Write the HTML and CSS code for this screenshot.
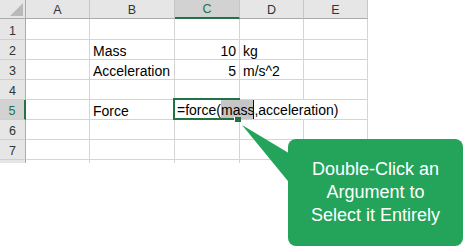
FILE: index.html
```html
<!DOCTYPE html>
<html lang="en">
<head>
    <meta charset="UTF-8">
    <meta name="viewport" content="width=device-width, initial-scale=1.0">
    <title>Force formula</title>
    <link rel="stylesheet" href="styles.css">
</head>
<body>
    <div class="sheet">
        <div class="grid">
            <div class="hd corner">
                <svg class="tri" width="14" height="14" viewBox="0 0 14 14"><polygon points="0,13 13,13 13,0" fill="#b9b9b9"/></svg>
            </div>
            <div class="hd col">A</div>
            <div class="hd col">B</div>
            <div class="hd col sel">C</div>
            <div class="hd col">D</div>
            <div class="hd col">E</div>

            <div class="hd row">1</div>
            <div></div><div></div><div></div><div></div><div></div>

            <div class="hd row">2</div>
            <div></div><div>Mass</div><div class="num">10</div><div>kg</div><div></div>

            <div class="hd row">3</div>
            <div></div><div>Acceleration</div><div class="num">5</div><div>m/s^2</div><div></div>

            <div class="hd row">4</div>
            <div></div><div></div><div></div><div></div><div></div>

            <div class="hd row sel">5</div>
            <div></div><div>Force</div>
            <div class="active">
                <div class="editor">=force(<span class="hl">mass</span><span class="caret"></span>,acceleration)</div>
                <div class="selection"></div>
                <div class="handle"></div>
            </div>
            <div></div><div></div>

            <div class="hd row">6</div>
            <div></div><div></div><div></div><div></div><div></div>

            <div class="hd row">7</div>
            <div></div><div></div><div></div><div></div><div></div>

            <div class="hd row"></div>
            <div></div><div></div><div></div><div></div><div></div>
        </div>

        <svg class="tail" width="467" height="252" viewBox="0 0 467 252">
            <polygon points="242,125 292,155 292,186" fill="#23a45a"/>
        </svg>
        <div class="callout">Double-Click an<br>Argument to<br>Select it Entirely</div>
    </div>
</body>
</html>
```

FILE: styles.css
```css
* {
    box-sizing: border-box;
}

body {
    margin: 0;
    background: #fff;
    font-family: "Liberation Sans", Arial, sans-serif;
}

.sheet {
    position: relative;
    width: 467px;
    height: 252px;
    overflow: hidden;
}

.grid {
    display: grid;
    grid-template-columns: 26px 64px 85px 65px 64px 64px;
    grid-template-rows: 19px 21px repeat(6, 20px) 4px;
    width: 368px;
    height: 163px;
    overflow: hidden;
}

.grid > div {
    display: flex;
    align-items: flex-end;
    padding: 0 3px;
    border-right: 1px solid #d4d4d4;
    border-bottom: 1px solid #d4d4d4;
    font-size: 14px;
    line-height: 16px;
    color: #000;
    white-space: nowrap;
}

.grid > .num {
    justify-content: flex-end;
    padding-right: 3px;
}

.grid > .hd {
    justify-content: center;
    background: #e6e6e6;
    color: #333;
    font-size: 12.5px;
    line-height: 15px;
    padding: 0;
}

.grid > .col {
    border-right-color: #c6c6c6;
    border-bottom-color: #ababab;
}

.grid > .corner {
    position: relative;
    border-right-color: #ababab;
    border-bottom-color: #ababab;
}

.tri {
    position: absolute;
    left: 10px;
    top: 3px;
}

.grid > .row {
    border-right-color: #ababab;
    border-bottom-color: #cfcfcf;
}

.grid > .hd.sel {
    background: #d2d2d2;
    color: #217346;
}

.grid > .col.sel {
    border-bottom: 2px solid #217346;
}

.grid > .row.sel {
    border-right: 2px solid #217346;
}

.grid > .active {
    position: relative;
    overflow: visible;
}

.editor {
    position: absolute;
    left: 0;
    top: 0;
    z-index: 2;
    width: 164px;
    height: 19px;
    padding-left: 2px;
    background: #fff;
    font-size: 14px;
    line-height: 20px;
    white-space: nowrap;
}

.hl {
    display: inline-block;
    height: 19px;
    vertical-align: top;
    background: #c6c6c6;
}

.caret {
    display: inline-block;
    width: 1px;
    height: 19px;
    margin-left: -1px;
    vertical-align: top;
    background: #111;
}

.selection {
    position: absolute;
    left: -2px;
    top: -2px;
    z-index: 3;
    width: 67px;
    height: 22px;
    border-top: 2px solid #217346;
    border-left: 2px solid #217346;
    border-bottom: 2px solid #217346;
}

.handle {
    position: absolute;
    left: 59px;
    top: 17px;
    z-index: 4;
    width: 7px;
    height: 5px;
    background: #217346;
    border-left: 1px solid #fff;
}

.tail {
    position: absolute;
    left: 0;
    top: 0;
    z-index: 5;
}

.callout {
    position: absolute;
    left: 288px;
    top: 139px;
    z-index: 6;
    display: flex;
    align-items: center;
    justify-content: center;
    width: 175px;
    height: 107px;
    background: #23a45a;
    border-radius: 8px;
    color: #fff;
    font-size: 18px;
    line-height: 23px;
    text-align: center;
}
```
